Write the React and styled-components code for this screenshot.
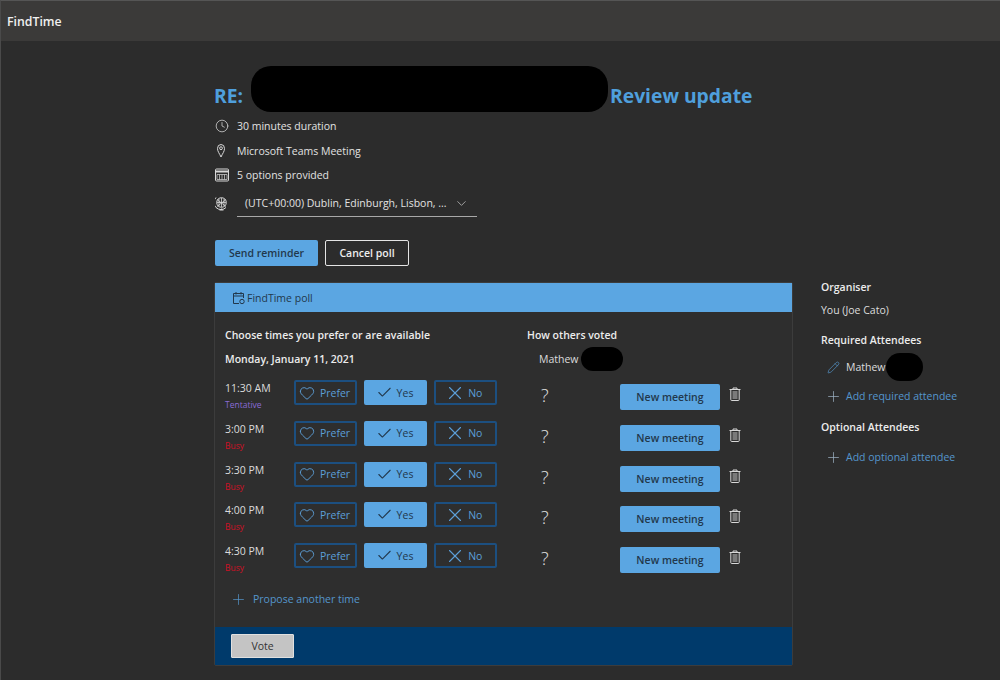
import React from "react";
import styled, { createGlobalStyle } from "styled-components";
import { Clock, Heart, Check, X, Plus, Pencil, ChevronDown } from "lucide-react";

const Global = createGlobalStyle`
  html, body { margin: 0; padding: 0; background: #2c2c2c; }
  body { font-family: "Open Sans", "Noto Sans", "Liberation Sans", sans-serif; color: #e6e6e6; }
  * { box-sizing: border-box; }
`;

const Page = styled.div`
  width: 1000px;
  height: 680px;
  overflow: hidden;
  background: #2c2c2c;
  border-left: 1px solid #4a4a4a;
  border-top: 1px solid #555;
`;
const TopBar = styled.header`
  height: 40px;
  background: #3b3a39;
  display: flex;
  align-items: center;
  padding-left: 6px;
  font-size: 12.3px;
  font-weight: 600;
  color: #f0f0f0;
`;
const Layout = styled.div`
  display: flex;
  padding-left: 213px;
`;
const Main = styled.main`
  width: 579px;
  display: flex;
  flex-direction: column;
`;
const Title = styled.h1`
  margin: 25px 0 0 0;
  height: 46px;
  padding-bottom: 1px;
  display: flex;
  align-items: flex-end;
  font-size: 19.3px;
  line-height: 30px;
  font-weight: 700;
  color: #4f9fdc;
`;
const Redact = styled.span`
  display: block;
  background: #000;
  width: ${p => p.$w}px;
  height: ${p => p.$h}px;
  border-radius: ${p => p.$r}px;
  flex: none;
  margin-left: ${p => p.$ml || 0}px;
`;
const TitleRedact = styled(Redact)`
  align-self: flex-start;
  margin: 0 2px 0 8px;
`;
const InfoList = styled.div`
  display: flex;
  flex-direction: column;
  margin: 2px 0 0 1px;
`;
const InfoRow = styled.div`
  height: 24.5px;
  display: flex;
  align-items: center;
  font-size: 10.5px;
  color: #e2e2e2;
`;
const IconSlot = styled.span`
  width: 22px;
  display: flex;
  flex: none;
  color: #d8d8d8;
`;
const TzRow = styled.div`
  display: flex;
  align-items: center;
  margin: 2.5px 0 0 1px;
  height: 27px;
`;
const TzSelect = styled.div`
  width: 240px;
  height: 26px;
  display: flex;
  align-items: center;
  justify-content: space-between;
  padding: 0 8px;
  border-bottom: 1.5px solid #a8a8a8;
  font-size: 10.5px;
  color: #e2e2e2;
`;
const Actions = styled.div`
  display: flex;
  gap: 7px;
  margin: 23px 0 16px 1px;
`;
const PrimaryBtn = styled.button`
  width: ${p => p.$w}px;
  height: 26px;
  padding: 0;
  border: 0;
  border-radius: 2px;
  background: #5ba6e2;
  color: #22384c;
  font: 600 10.5px "Open Sans", sans-serif;
`;
const GhostBtn = styled.button`
  width: 84px;
  height: 26px;
  padding: 0;
  background: #2c2c2c;
  border: 1px solid #e4e4e4;
  border-radius: 2px;
  color: #eee;
  font: 600 10.5px "Open Sans", sans-serif;
`;
const Card = styled.section`
  height: 384px;
  border: 1px solid #3c3c3c;
  border-radius: 2px;
  display: flex;
  flex-direction: column;
  background: #2e2e2e;
`;
const CardHead = styled.div`
  height: 29px;
  flex: none;
  background: #5ba6e2;
  display: flex;
  align-items: center;
  padding-left: 17px;
  font-size: 10.5px;
  color: #22384c;
`;
const CardBody = styled.div`
  flex: 1;
  padding: 15px 0 0 10px;
`;
const Headings = styled.div`
  display: flex;
  font-size: 10.5px;
  font-weight: 600;
  color: #ececec;
  line-height: 16px;
`;
const HeadLeft = styled.div`
  width: 302px;
`;
const DateRow = styled.div`
  display: flex;
  align-items: center;
  height: 30px;
  margin: 1px 0 6px;
  font-size: 10.5px;
`;
const DateLabel = styled.div`
  width: 314px;
  font-weight: 600;
  color: #ececec;
`;
const Voter = styled.div`
  display: flex;
  align-items: center;
  color: #dcdcdc;
  gap: 2px;
`;
const Row = styled.div`
  height: 40.75px;
  display: flex;
  align-items: flex-start;
`;
const TimeCell = styled.div`
  width: 69px;
  padding-top: 1px;
  font-size: 10.5px;
  line-height: 15px;
  color: #dcdcdc;
`;
const Status = styled.div`
  margin-top: 3px;
  font-size: 8.5px;
  line-height: 12px;
  color: ${p => p.$c};
`;
const VoteBtns = styled.div`
  display: flex;
  gap: 7px;
  width: 243px;
`;
const VoteBtn = styled.button`
  width: 63px;
  height: 25px;
  padding: 0 ${p => p.$pr}px 0 0;
  display: flex;
  align-items: center;
  justify-content: center;
  gap: ${p => p.$gap}px;
  border-radius: 2px;
  border: 2px solid ${p => (p.$on ? "#5ba6e2" : "#1c4f80")};
  background: ${p => (p.$on ? "#5ba6e2" : "transparent")};
  color: ${p => (p.$on ? "#22384c" : "#5c9fd8")};
  font: 400 10.5px "Open Sans", sans-serif;
`;
const Question = styled.div`
  width: 83px;
  padding: 5px 0 0 4px;
  font-size: 18px;
  font-weight: 300;
  line-height: 20px;
  color: #e2e2e2;
`;
const MeetingBtn = styled(PrimaryBtn)`
  margin-top: 4px;
`;
const TrashSlot = styled.span`
  display: flex;
  margin: 7px 0 0 9px;
  color: #d8d8d8;
`;
const LinkRow = styled.div`
  display: flex;
  align-items: center;
  font-size: 10.5px;
  color: #5596cc;
`;
const Propose = styled(LinkRow)`
  gap: 6px;
  margin: 7px 0 0 5px;
`;
const VoteBar = styled.div`
  height: 38px;
  flex: none;
  background: #003a6b;
  display: flex;
  align-items: center;
  padding-left: 16px;
`;
const VoteSubmit = styled.button`
  width: 63px;
  height: 24px;
  padding: 0;
  background: #c4c4c4;
  border: 1px solid #e0e0e0;
  border-radius: 1px;
  color: #333;
  font: 400 10.5px "Open Sans", sans-serif;
`;
const Side = styled.aside`
  margin: 238px 0 0 28px;
  width: 170px;
  font-size: 10.5px;
  color: #dcdcdc;
  display: flex;
  flex-direction: column;
`;
const SideTitle = styled.div`
  font-weight: 600;
  line-height: 16px;
  margin-top: ${p => p.$mt || 0}px;
  color: #ececec;
`;
const SideText = styled.div`
  line-height: 16px;
  margin-top: 7px;
`;
const Attendee = styled.div`
  display: flex;
  align-items: center;
  height: 28px;
  margin: 5px 0 0 6px;
  gap: 6px;
`;
const AddRow = styled(LinkRow)`
  gap: 4px;
  margin: ${p => p.$mt}px 0 0 4px;
  height: 16px;
`;

const Pin = () => (
  <svg width="13" height="15" viewBox="0 0 13 15" fill="none" stroke="currentColor" strokeWidth="1">
    <path d="M6 14 C4.5 10.5 2.5 8.5 2.5 5.5 a3.5 4 0 0 1 7 0 C9.5 8.5 7.5 10.5 6 14z" />
    <circle cx="6" cy="5.2" r="1.4" />
  </svg>
);
const Cal = () => (
  <svg width="15" height="14" viewBox="0 0 15 14" fill="none" stroke="currentColor" strokeWidth="1">
    <rect x="0.5" y="1" width="13" height="12" rx="1" />
    <path d="M0.5 3.5h13" strokeWidth="2" />
    <path d="M2 6.5h10v5H2z M4.5 6.5v5 M7 6.5v5 M9.5 6.5v5" strokeWidth=".7" />
  </svg>
);
const Globe = () => (
  <svg width="14" height="15" viewBox="0 0 14 15" fill="none" stroke="currentColor" strokeWidth="1">
    <circle cx="6.5" cy="6.5" r="4.8" />
    <path d="M2 3.5l9 7 M11 3.5l-9 7 M2 6.5h9 M6.5 2v9 M4 2.5v8 M9 2.5v8" strokeWidth=".8" />
    <path d="M1 1.5a7 7 0 0 0 10 10 M6.5 12.5v1.5 M4.5 14h4" />
  </svg>
);
const PollIcon = () => (
  <svg width="15" height="14" viewBox="0 0 15 14" fill="none" stroke="currentColor" strokeWidth="1">
    <path d="M7 12.5H1.5v-10h10V7 M1.5 5h10 M4 1v2.5 M9 1v2.5" />
    <circle cx="10" cy="10.5" r="2.2" />
  </svg>
);
const Trash = () => (
  <svg width="12" height="14" viewBox="0 0 12 14" fill="none" stroke="currentColor" strokeWidth="1">
    <path d="M0.5 2.5h11 M4 2.5V1h4v1.5" />
    <path d="M1.8 2.5v10.2c0 .5.3.8.8.8h6.8c.5 0 .8-.3.8-.8V2.5" />
    <path d="M3.5 4v8h5V4" fill="currentColor" fillOpacity=".45" stroke="none" />
  </svg>
);

const rows = [
  ["11:30 AM", "Tentative", "#8a6bd6"],
  ["3:00 PM", "Busy", "#d01025"],
  ["3:30 PM", "Busy", "#d01025"],
  ["4:00 PM", "Busy", "#d01025"],
  ["4:30 PM", "Busy", "#d01025"],
];

export default function App() {
  return (
    <Page>
      <Global />
      <TopBar>FindTime</TopBar>
      <Layout>
        <Main>
          <Title>
            RE:<TitleRedact $w={357} $h={46} $r={20} />Review update
          </Title>
          <InfoList>
            <InfoRow><IconSlot><Clock size={14} strokeWidth={1.3} /></IconSlot>30 minutes duration</InfoRow>
            <InfoRow><IconSlot><Pin /></IconSlot>Microsoft Teams Meeting</InfoRow>
            <InfoRow><IconSlot><Cal /></IconSlot>5 options provided</InfoRow>
          </InfoList>
          <TzRow>
            <IconSlot><Globe /></IconSlot>
            <TzSelect>(UTC+00:00) Dublin, Edinburgh, Lisbon, ...<ChevronDown size={15} strokeWidth={1} /></TzSelect>
          </TzRow>
          <Actions>
            <PrimaryBtn $w={103}>Send reminder</PrimaryBtn>
            <GhostBtn>Cancel poll</GhostBtn>
          </Actions>
          <Card>
            <CardHead><PollIcon />FindTime poll</CardHead>
            <CardBody>
              <Headings>
                <HeadLeft>Choose times you prefer or are available</HeadLeft>
                <div>How others voted</div>
              </Headings>
              <DateRow>
                <DateLabel>Monday, January 11, 2021</DateLabel>
                <Voter>Mathew<Redact $w={42} $h={24} $r={12} /></Voter>
              </DateRow>
              {rows.map(([t, s, c]) => (
                <Row key={t}>
                  <TimeCell>{t}<Status $c={c}>{s}</Status></TimeCell>
                  <VoteBtns>
                    <VoteBtn $gap={5} $pr={2}><Heart size={16} strokeWidth={1.4} />Prefer</VoteBtn>
                    <VoteBtn $on $gap={4} $pr={2}><Check size={17} strokeWidth={1.5} />Yes</VoteBtn>
                    <VoteBtn $gap={2.5} $pr={5}><X size={22} strokeWidth={1.2} />No</VoteBtn>
                  </VoteBtns>
                  <Question>?</Question>
                  <MeetingBtn $w={100}>New meeting</MeetingBtn>
                  <TrashSlot><Trash /></TrashSlot>
                </Row>
              ))}
              <Propose><Plus size={17} strokeWidth={1} />Propose another time</Propose>
            </CardBody>
            <VoteBar><VoteSubmit>Vote</VoteSubmit></VoteBar>
          </Card>
        </Main>
        <Side>
          <SideTitle>Organiser</SideTitle>
          <SideText>You (Joe Cato)</SideText>
          <SideTitle $mt={14}>Required Attendees</SideTitle>
          <Attendee>
            <Pencil size={13} strokeWidth={1.1} color="#5ba6e2" />Mathew
            <Redact $w={37} $h={28} $r={14} $ml={-6} />
          </Attendee>
          <AddRow $mt={7}><Plus size={17} strokeWidth={1} color="#9fb4c6" />Add required attendee</AddRow>
          <SideTitle $mt={15}>Optional Attendees</SideTitle>
          <AddRow $mt={14}><Plus size={17} strokeWidth={1} color="#9fb4c6" />Add optional attendee</AddRow>
        </Side>
      </Layout>
    </Page>
  );
}
